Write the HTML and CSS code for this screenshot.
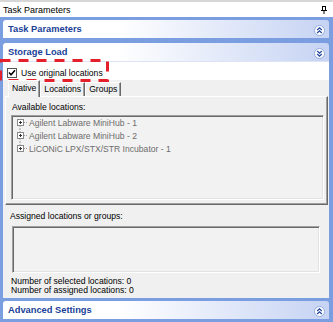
FILE: index.html
```html
<!DOCTYPE html>
<html lang="en">
<head>
    <meta charset="UTF-8">
    <title>Task Parameters</title>
    <link rel="stylesheet" href="styles.css">
</head>
<body>

    <div class="topline"></div>
    <div class="titlebar">
        <span>Task Parameters</span>
        <svg class="pin" width="6" height="8" viewBox="0 0 6 8">
            <rect x="1.5" y="0.5" width="3" height="4" fill="none" stroke="#000" stroke-width="1"/>
            <line x1="0" y1="4.5" x2="6" y2="4.5" stroke="#000" stroke-width="1"/>
            <line x1="3" y1="5" x2="3" y2="8" stroke="#000" stroke-width="1"/>
        </svg>
    </div>

    <div class="pane">
        <div class="group-head">
            <span>Task Parameters</span>
            <svg class="chev" width="11" height="11" viewBox="0 0 11 11">
                <circle cx="5.5" cy="5.5" r="5" fill="#fff" stroke="#93abe0"/>
                <polyline points="3.2,5 5.5,2.8 7.8,5" fill="none" stroke="#24469e" stroke-width="1.3"/>
                <polyline points="3.2,8 5.5,5.8 7.8,8" fill="none" stroke="#24469e" stroke-width="1.3"/>
            </svg>
        </div>

        <div class="group-head second">
            <span>Storage Load</span>
            <svg class="chev" width="11" height="11" viewBox="0 0 11 11">
                <circle cx="5.5" cy="5.5" r="5" fill="#fff" stroke="#93abe0"/>
                <polyline points="3.2,3 5.5,5.2 7.8,3" fill="none" stroke="#24469e" stroke-width="1.3"/>
                <polyline points="3.2,6 5.5,8.2 7.8,6" fill="none" stroke="#24469e" stroke-width="1.3"/>
            </svg>
        </div>
        <div class="group-body">
            <div class="check-row">
                <svg class="checkbox" width="10" height="10" viewBox="0 0 10 10">
                    <rect x="0.5" y="0.5" width="9" height="9" fill="#fff" stroke="#555"/>
                    <polyline points="2,4.5 4,6.8 8,2.2" fill="none" stroke="#000" stroke-width="1.5"/>
                </svg>
                <span>Use original locations</span>
            </div>

            <div class="tabs">
                <div class="tab active">Native</div>
                <div class="tab">Locations</div>
                <div class="tab">Groups</div>
            </div>
            <div class="tab-page">
                <div class="label">Available locations:</div>
                <div class="listbox tree">
                    <div class="node">
                        <svg width="14" height="13" viewBox="0 0 14 13">
                            <line x1="6" y1="10" x2="6" y2="13" stroke="#a0a0a0" stroke-dasharray="1 1"/>
                            <rect x="3.5" y="3.5" width="6" height="6" fill="#fff" stroke="#8a8a8a"/>
                            <line x1="5" y1="6.5" x2="8" y2="6.5" stroke="#333"/>
                            <line x1="6.5" y1="5" x2="6.5" y2="8" stroke="#333"/>
                            <line x1="10" y1="6.5" x2="14" y2="6.5" stroke="#a0a0a0" stroke-dasharray="1 1"/>
                        </svg>
                        <span>Agilent Labware MiniHub - 1</span>
                    </div>
                    <div class="node">
                        <svg width="14" height="13" viewBox="0 0 14 13">
                            <line x1="6" y1="0" x2="6" y2="3" stroke="#a0a0a0" stroke-dasharray="1 1"/>
                            <line x1="6" y1="10" x2="6" y2="13" stroke="#a0a0a0" stroke-dasharray="1 1"/>
                            <rect x="3.5" y="3.5" width="6" height="6" fill="#fff" stroke="#8a8a8a"/>
                            <line x1="5" y1="6.5" x2="8" y2="6.5" stroke="#333"/>
                            <line x1="6.5" y1="5" x2="6.5" y2="8" stroke="#333"/>
                            <line x1="10" y1="6.5" x2="14" y2="6.5" stroke="#a0a0a0" stroke-dasharray="1 1"/>
                        </svg>
                        <span>Agilent Labware MiniHub - 2</span>
                    </div>
                    <div class="node">
                        <svg width="14" height="13" viewBox="0 0 14 13">
                            <line x1="6" y1="0" x2="6" y2="3" stroke="#a0a0a0" stroke-dasharray="1 1"/>
                            <rect x="3.5" y="3.5" width="6" height="6" fill="#fff" stroke="#8a8a8a"/>
                            <line x1="5" y1="6.5" x2="8" y2="6.5" stroke="#333"/>
                            <line x1="6.5" y1="5" x2="6.5" y2="8" stroke="#333"/>
                            <line x1="10" y1="6.5" x2="14" y2="6.5" stroke="#a0a0a0" stroke-dasharray="1 1"/>
                        </svg>
                        <span>LiCONiC LPX/STX/STR Incubator - 1</span>
                    </div>
                </div>
            </div>

            <div class="label assigned-label">Assigned locations or groups:</div>
            <div class="listbox assigned"></div>

            <div class="counts">
                <div>Number of selected locations: 0</div>
                <div>Number of assigned locations: 0</div>
            </div>
        </div>

        <div class="group-head third">
            <span>Advanced Settings</span>
            <svg class="chev" width="11" height="11" viewBox="0 0 11 11">
                <circle cx="5.5" cy="5.5" r="5" fill="#fff" stroke="#93abe0"/>
                <polyline points="3.2,5 5.5,2.8 7.8,5" fill="none" stroke="#24469e" stroke-width="1.3"/>
                <polyline points="3.2,8 5.5,5.8 7.8,8" fill="none" stroke="#24469e" stroke-width="1.3"/>
            </svg>
        </div>
    </div>

    <!-- red dashed highlight drawn over the checkbox -->
    <svg class="highlight" width="112" height="24" viewBox="0 0 112 24">
        <rect x="1.5" y="1.5" width="107" height="20" fill="none" stroke="#e3202b" stroke-width="3" stroke-dasharray="10 8"/>
    </svg>

</body>
</html>
```

FILE: styles.css
```css
body {
    margin: 0;
    width: 333px;
    height: 322px;
    overflow: hidden;
    position: relative;
    font-family: "Liberation Sans", Arial, sans-serif;
    font-size: 8.6px;
    background-color: #fff;
}
.topline {
    height: 2px;
    background-color: #d6d6d6;
}
.titlebar {
    height: 15px;
    display: flex;
    align-items: center;
    justify-content: space-between;
    padding: 0 6px 0 3px;
    font-size: 9px;
    color: #000;
}
.pane {
    height: 299px;
    background-color: #7a9edf; /* bleu */
    padding: 3px 4px 3px 3px;
}
.group-head {
    height: 18px;
    display: flex;
    align-items: center;
    justify-content: space-between;
    padding: 0 4px 0 5px;
    border-radius: 3px 3px 0 0;
    background: linear-gradient(to right, #fff 0%, #fff 35%, #c6d3f3 100%);
    color: #203f98;
    font-weight: bold;
    font-size: 9.3px;
}
.group-head .chev {
    margin-top: 2px;
}
.group-head.second {
    margin-top: 5px;
}
.group-head.third {
    margin-top: 3px;
}
.group-body {
    height: 237px;
    background-color: #f0f0f0;
}
.check-row {
    height: 19px;
    box-sizing: border-box;
    display: flex;
    align-items: center;
    padding: 4px 0 0 4px;
    background-color: #fff;
    border-top: 1px solid #dbe3f5;
}
.checkbox {
    margin-right: 4px;
}
.tabs {
    height: 16px;
    display: flex;
    align-items: flex-end;
    padding-left: 5px;
    position: relative;
    z-index: 1;
}
.tab {
    height: 13px;
    line-height: 13px;
    padding: 0 3px;
    border-top: 1px solid #fff;
    border-left: 1px solid #fff;
    border-right: 1px solid #696969;
    box-shadow: inset -1px 0 0 #a0a0a0;
    color: #000;
}
.tab.active {
    height: 16px;
    line-height: 15px;
    margin-bottom: -1px;
    background-color: #f0f0f0;
}
.tab-page {
    height: 109px;
    box-sizing: border-box;
    margin: 0 1px 0 2px;
    padding: 5px 3px 4px 5px;
    border-top: 1px solid #fff;
    border-left: 1px solid #fff;
    border-right: 1px solid #696969;
    border-bottom: 1px solid #696969;
    box-shadow: inset -1px -1px 0 #a0a0a0;
}
.label {
    line-height: 10px;
    color: #000;
    margin-left: 1px;
}
.listbox {
    box-sizing: border-box;
    border-top: 1px solid #a0a0a0;
    border-left: 1px solid #a0a0a0;
    border-right: 1px solid #fff;
    border-bottom: 1px solid #fff;
    box-shadow: inset 1px 1px 0 #696969, inset -1px -1px 0 #e3e3e3;
    background-color: #f2f2f2;
}
.tree {
    height: 85px;
    margin-top: 3px;
    padding: 0 0 0 2px;
}
.node {
    height: 13px;
    display: flex;
    align-items: center;
    color: #6d6d6d;
}
.node svg {
    margin-right: 1px;
}
.assigned-label {
    margin: 6px 0 0 7px;
}
.assigned {
    width: 308px;
    height: 47px;
    margin: 5px 0 0 9px;
}
.counts {
    margin-top: 4px;
    padding-left: 8px;
    line-height: 9px;
    color: #000;
}
.highlight {
    position: absolute;
    top: 59px;
    left: -1px;
}
```
